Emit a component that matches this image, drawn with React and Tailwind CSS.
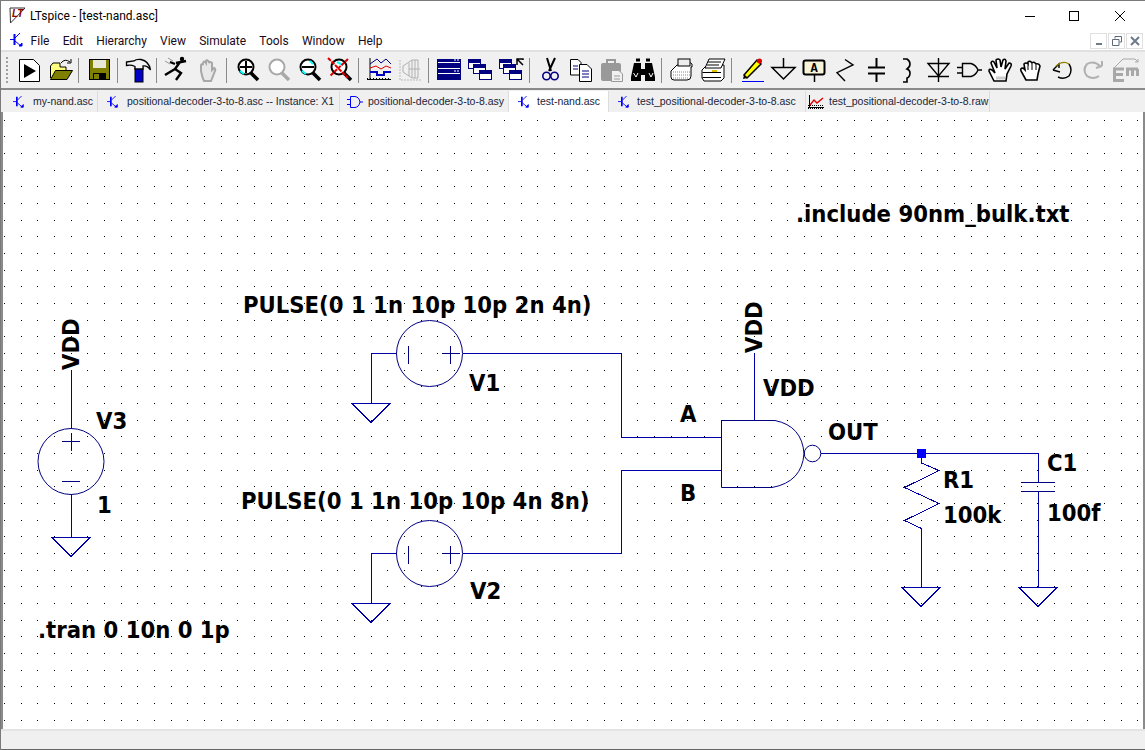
import React from "react";

const step = 50 / 3;
let gridPath = "";
for (let r = 0; r <= 36; r++) {
  for (let c = 0; c <= 68; c++) {
    const x = Math.floor(4.34 + c * step);
    const y = Math.floor(120.01 + r * step);
    gridPath += `M${x} ${y}h1v1h-1z`;
  }
}

// schematic wires, page coordinates
const WIRES = [
  "M71.5 370V428", "M71.5 495V537",
  "M463 353.5H621.5V437.5H722", "M397 353.5H371.5V403",
  "M463 553.5H621.5V470.5H722", "M397 553.5H371.5V603",
  "M754.5 353V420", "M821 453.5H1038.5V482", "M1038.5 492V587",
  "M921.5 528V587",
];

function Ground({ x, y }) {
  return <path d={`M${x - 19} ${y}.5H${x + 19}L${x} ${y + 19}.5Z`} fill="none" stroke="#0000a8" />;
}

function Source({ cx, cy, vertical }) {
  if (vertical) {
    return (
      <g stroke="#000080" fill="none">
        <circle cx={cx} cy={cy} r="33" />
        <path d={`M${cx - 9} ${cy - 20}H${cx + 9}M${cx} ${cy - 29}V${cy - 11}M${cx - 9} ${cy + 20}H${cx + 9}`} shapeRendering="crispEdges" />
      </g>
    );
  }
  return (
    <g stroke="#000080" fill="none">
      <circle cx={cx} cy={cy} r="33" />
      <path d={`M${cx - 21.5} ${cy - 8}V${cy + 10}M${cx + 12} ${cy}H${cx + 30}M${cx + 21} ${cy - 8}V${cy + 10}`} shapeRendering="crispEdges" />
    </g>
  );
}

function Transistor({ className }) {
  return (
    <svg viewBox="0 0 14 14" className={className} fill="none" stroke="#0000ff">
      <path d="M4.5 1V12" strokeWidth="2" />
      <path d="M4 6.5H0M5 5L10 0M5 8L11 13" />
      <path d="M9 13H12V10Z" fill="#0000ff" strokeWidth="1" />
    </svg>
  );
}

function GateGlyph() {
  return (
    <svg viewBox="0 0 16 14" className="w-[16px] h-[14px] shrink-0" fill="none" stroke="#0000ff">
      <path d="M3.5 1.5H8Q12 2 13 7Q12 12 8 12.5H3.5ZM0 4.5H3M0 9.5H3M13 7H16" />
    </svg>
  );
}

function PlotGlyph() {
  return (
    <svg viewBox="0 0 16 14" className="w-[16px] h-[14px] shrink-0" fill="none">
      <path d="M1.5 0V13M0 12.5H16" stroke="#000" />
      <path d="M0 10.5H16M0 13.5H16" stroke="#000" strokeDasharray="1 1" />
      <path d="M2 10L6 5L9 8L15 3" stroke="#e00000" strokeWidth="1.5" />
    </svg>
  );
}

function Sep() {
  return <div className="ml-[2px] mr-[5px] w-[1px] h-[25px] mt-[6px] bg-[#8a8a8a] shrink-0" />;
}

function Btn({ children }) {
  return (
    <div className="w-[31px] pl-[3px] pt-[6px] shrink-0">
      <svg viewBox="0 0 25 25" className="w-[25px] h-[25px] overflow-visible" fill="none">
        {children}
      </svg>
    </div>
  );
}

function Lens({ children, stroke = "#000" }) {
  return (
    <>
      <circle cx="11" cy="9" r="7.5" fill="#fff" stroke={stroke} strokeWidth="2" />
      <path d="M16 15L23 22" stroke={stroke} strokeWidth="3.5" />
      {children}
    </>
  );
}

function Win({ x, y, w = 12, h = 9 }) {
  return (
    <g>
      <rect x={x + 0.5} y={y + 0.5} width={w} height={h} fill="#fff" stroke="#000080" />
      <rect x={x} y={y} width={w + 1} height="4" fill="#000080" />
    </g>
  );
}

const TABS = [
  { width: "w-[93px]", pad: "pl-[8px] gap-[8px]", label: "my-nand.asc", icon: "t" },
  { width: "w-[242px]", pad: "pl-[9px] gap-[8px]", label: "positional-decoder-3-to-8.asc -- Instance: X1", icon: "t" },
  { width: "w-[169px]", pad: "pl-[7px] gap-[5px]", label: "positional-decoder-3-to-8.asy", icon: "g" },
  { width: "w-[100px]", pad: "pl-[9px] gap-[7px]", label: "test-nand.asc", icon: "t", active: true },
  { width: "w-[197px]", pad: "pl-[9px] gap-[7px]", label: "test_positional-decoder-3-to-8.asc", icon: "t" },
  { width: "w-[184px]", pad: "pl-[2px] gap-[5px]", label: "test_positional-decoder-3-to-8.raw", icon: "p" },
];

function Label({ className, children }) {
  return (
    <span className={`absolute whitespace-nowrap text-[23.6px] leading-[24px] font-bold text-black font-['DejaVu_Sans_Condensed','DejaVu_Sans',sans-serif] [font-stretch:condensed] ${className}`}>
      {children}
    </span>
  );
}

export default function App() {
  return (
    <div className="w-[1145px] h-[750px] flex flex-col overflow-hidden bg-[#f0f0f0] font-['Roboto',sans-serif] border-t border-l border-[#7a7a7a]">
      {/* Title */}
      <header className="h-[29px] bg-white flex items-center shrink-0">
        <svg viewBox="0 0 18 18" className="w-[18px] h-[18px] ml-[8px]">
          <path d="M1 1H16L1.5 16Z" fill="#fff" stroke="#333" />
          <text x="3" y="10" fontSize="10" fontWeight="bold" fontStyle="italic" fill="#8b0000" fontFamily="Liberation Sans">LT</text>
        </svg>
        <span className="ml-[3px] text-[12px] text-black">LTspice - [test-nand.asc]</span>
        <div className="ml-auto flex items-center mr-[2px]">
          <svg viewBox="0 0 46 29" className="w-[46px] h-[29px]" stroke="#000"><path d="M20 15.5H30" /></svg>
          <svg viewBox="0 0 46 29" className="w-[46px] h-[29px]" fill="none" stroke="#000"><rect x="18.5" y="10.5" width="9" height="9" /></svg>
          <svg viewBox="0 0 46 29" className="w-[46px] h-[29px]" stroke="#000"><path d="M18 10L28 20M28 10L18 20" /></svg>
        </div>
      </header>

      {/* Menu */}
      <nav className="h-[20px] bg-white flex items-center shrink-0 relative">
        <Transistor className="w-[14px] h-[14px] ml-[9px]" />
        <ul className="flex text-[12px] text-[#1a0a1a] pt-[2px]">
          <li className="px-[6.6px]">File</li>
          <li className="px-[6.6px]">Edit</li>
          <li className="px-[6.6px]">Hierarchy</li>
          <li className="px-[6.6px]">View</li>
          <li className="px-[6.6px]">Simulate</li>
          <li className="px-[6.6px]">Tools</li>
          <li className="px-[6.6px]">Window</li>
          <li className="px-[6.6px]">Help</li>
        </ul>
        <div className="ml-auto flex gap-[1px] mr-[2px] mt-[1px]">
          <div className="w-[17px] h-[16px] border border-[#e0e0e0] flex items-end justify-center pb-[3px]"><div className="w-[6px] h-[2px] bg-[#6d7a88]" /></div>
          <div className="w-[17px] h-[16px] border border-[#e0e0e0] flex items-center justify-center">
            <svg viewBox="0 0 10 10" className="w-[10px] h-[10px]" fill="none" stroke="#5d6a78"><path d="M3 2.5V.5H9.5V6H7.5M.5 3.5H7V9.5H.5Z" /></svg>
          </div>
          <div className="w-[17px] h-[16px] border border-[#e0e0e0] flex items-center justify-center">
            <svg viewBox="0 0 10 10" className="w-[10px] h-[10px]" stroke="#6d7a88" strokeWidth="2"><path d="M1 1L9 9M9 1L1 9" /></svg>
          </div>
        </div>
      </nav>

      {/* Toolbar */}
      <div className="h-[38px] border-t-2 border-[#e0e0e0] flex shrink-0 relative pl-[13px]">
        <div className="absolute left-[5px] top-[5px] h-[26px] w-[3px] border-l-2 border-dotted border-[#a0a0a0]" />
        <Btn>
          <path d="M2.5 1.5H16.5L22.5 7.5V23.5H2.5Z" fill="#fff" stroke="#000" />
          <path d="M7 6V20L19 13Z" fill="#000" />
        </Btn>
        <Btn>
          <path d="M2.5 20V8L5 5H12V9H18V13" fill="#ffff80" stroke="#000" />
          <path d="M2.5 21.5L7.5 12.5H24.5L19 21.5Z" fill="#808000" stroke="#000" />
          <path d="M13 5Q17 0 22 4M23 1V5H19" stroke="#000" />
        </Btn>
        <Sep />
        <Btn>
          <rect x="2.5" y="1.5" width="20" height="20" fill="#808000" stroke="#000" />
          <rect x="6" y="2" width="13" height="8" fill="#e8e8d8" />
          <rect x="6" y="15" width="13" height="7" fill="#000" />
          <rect x="7" y="16" width="5" height="5" fill="#808000" />
        </Btn>
        <Sep />
        <Btn>
          <rect x="9" y="10" width="8" height="14" fill="#0000c8" stroke="#000" />
          <path d="M0.5 4L8 3Q10 1 15 1.5Q23 3 24.5 12Q21 7 17 8V11H9V8.5Q5 6.5 0.5 7.5Z" fill="#f4f4f4" stroke="#000" strokeWidth="1.3" />
        </Btn>
        <Sep />
        <Btn>
          <path d="M15 4L10 11M11 5L21 3M10 6L5 4M10 11L0 17M10 11L16 15L11 22" stroke="#000" strokeWidth="2.4" />
          <circle cx="17" cy="1" r="2.2" fill="#000" />
          <path d="M3 0L8 3M0 3L5 6" stroke="#999" />
        </Btn>
        <Btn>
          <path d="M5 13V7Q6 5 7 7V5Q8 2 10 5V3Q11 1 13 4V5Q14 3 16 5V12L18 10Q20 11 19 13L15 23H8Q6 19 5 13Z" fill="#e8e8e8" stroke="#a8a8a8" strokeWidth="2" />
        </Btn>
        <Sep />
        <Btn>
          <Lens>
            <path d="M5 9H17M11 3V15" stroke="#000" strokeWidth="2" />
            <path d="M5 13L9 16" stroke="#00ffff" strokeWidth="2" />
          </Lens>
        </Btn>
        <Btn>
          <Lens stroke="#a8a8a8" />
        </Btn>
        <Btn>
          <Lens>
            <path d="M5 9H17" stroke="#000" strokeWidth="2" />
            <path d="M5 13L9 16M13 3L16 6" stroke="#00ffff" strokeWidth="2" />
          </Lens>
        </Btn>
        <Btn>
          <Lens>
            <path d="M9 4L15 7" stroke="#00ffff" strokeWidth="2" />
            <path d="M0 0L20 20M20 1L2 18" stroke="#e00000" strokeWidth="2" strokeDasharray="4 1" />
          </Lens>
        </Btn>
        <Sep />
        <Btn>
          <path d="M3 0V22M0 21.5H24" stroke="#000" />
          <path d="M0 20.5H24" stroke="#000" strokeDasharray="1 2" />
          <path d="M3 6L10 1L14 5L19 1L24 6" stroke="#000080" />
          <path d="M3 10L9 8L14 11L19 8L24 10" stroke="#e00000" />
          <path d="M3 14H10V17H17V14H24" stroke="#0000c0" strokeWidth="2" />
        </Btn>
        <Btn>
          <path d="M2 2V22H24" stroke="#bbb" strokeDasharray="2 1" />
          <path d="M5 8L14 2H20V20H14L5 14ZM11 5V18M14 2V20M17 2V20M22 11H11" stroke="#b0b0b0" />
        </Btn>
        <Sep />
        <Btn>
          <rect x="0.5" y="1.5" width="23" height="10" fill="#000080" stroke="#000080" />
          <rect x="0.5" y="12.5" width="23" height="9" fill="#000080" stroke="#000080" />
          <path d="M1 4.5H23M1 15.5H23" stroke="#fff" />
          <path d="M17 2H22M17 13H22" stroke="#fff" strokeDasharray="2 1" />
          <rect x="1" y="6" width="22" height="4" fill="#000080" />
          <rect x="1" y="10" width="22" height="1" fill="#fff" />
        </Btn>
        <Btn>
          <Win x={0} y={1} />
          <Win x={5} y={6} />
          <Win x={11} y={12} />
        </Btn>
        <Btn>
          <Win x={0} y={1} />
          <Win x={4} y={6} />
          <Win x={10} y={12} />
          <path d="M18 7V1H24V2M18 1L24 7" stroke="#000" strokeWidth="1.5" />
        </Btn>
        <Sep />
        <Btn>
          <path d="M9 0L13 13M17 0L11 13" stroke="#000" strokeWidth="2" />
          <circle cx="8.5" cy="18" r="3.7" stroke="#000080" strokeWidth="1.6" />
          <circle cx="16.5" cy="18" r="3.7" stroke="#000080" strokeWidth="1.6" />
        </Btn>
        <Btn>
          <path d="M1.5 1.5H9L12 4.5V17H1.5Z" fill="#fff" stroke="#000" />
          <path d="M10.5 6.5H18L22.5 11V23.5H10.5Z" fill="#fff" stroke="#000" />
          <path d="M4 8H9M4 11H9M13 13H20M13 16H20M13 19H20" stroke="#000080" />
        </Btn>
        <Btn>
          <rect x="1" y="5" width="20" height="18" rx="2" fill="#999" />
          <rect x="7" y="2" width="8" height="5" fill="none" stroke="#999" strokeWidth="2" />
          <path d="M11.5 12.5H19L22.5 16V23.5H11.5Z" fill="#f0f0f0" stroke="#999" />
          <path d="M14 18H20M14 21H20" stroke="#999" />
        </Btn>
        <Btn>
          <path d="M3 5H10V11H14V5H21L24 19V23H14V17H10V23H0V19Z" fill="#000" />
          <path d="M2.5 15L5 19L7 15M18 15L20 19L22 15" stroke="#fff" />
          <path d="M5 2H9M15 2H19" stroke="#000" strokeWidth="3" />
        </Btn>
        <Sep />
        <Btn>
          <path d="M1 13L7 7H18V3L22 6V9H21V18Q21 22 17 22H4Q1 22 1 19Z" fill="#fff" stroke="#000" />
          <rect x="8" y="1" width="12" height="7" fill="#eee" stroke="#000" />
          <path d="M3 14H20M3 17H20M3 20H19" stroke="#888" strokeDasharray="1 1" />
        </Btn>
        <Btn>
          <path d="M1 12L6 7H23V20L20 23H3L1 20Z" fill="#fff" stroke="#000" />
          <path d="M8 1H24L20 10H4Z" fill="#fff" stroke="#000" />
          <path d="M7 4H20M6 7H18" stroke="#000" />
          <path d="M1.5 14.5H20M1.5 19.5H20" stroke="#000" />
          <path d="M11 13H16" stroke="#e0c000" strokeWidth="2" />
        </Btn>
        <Sep />
        <Btn>
          <path d="M4 17L7 20L21 6L17 2Z" fill="#ffff00" stroke="#000" strokeWidth="1.5" />
          <path d="M4 17L3 21L7 20Z" fill="#000" />
          <circle cx="19.5" cy="3" r="2.5" fill="#e00000" />
          <path d="M2 23.5H24" stroke="#0000ff" />
        </Btn>
        <Btn>
          <path d="M12.5 0V9M1 9.5H24L12.5 21Z" stroke="#000" strokeWidth="1.5" />
        </Btn>
        <Btn>
          <rect x="1.5" y="2.5" width="21" height="14" rx="2" fill="#f8f4d8" stroke="#000" strokeWidth="2" />
          <text x="12" y="14" textAnchor="middle" fontSize="12" fontWeight="bold" fill="#000" fontFamily="Liberation Mono">A</text>
          <path d="M12.5 17V24" stroke="#000" strokeWidth="1.5" />
        </Btn>
        <Btn>
          <path d="M12 1.5L20 7L4 14.7L12 23" stroke="#000" strokeWidth="1.4" />
        </Btn>
        <Btn>
          <path d="M12.5 0V9M12.5 15V24M4 9.5H21M4 15.5H21" stroke="#000" strokeWidth="2" />
        </Btn>
        <Btn>
          <path d="M8 1H12Q15 3 15 6Q15 9 12 11Q15 12 15 15Q15 19 12 20V24H8" stroke="#000" strokeWidth="1.6" />
        </Btn>
        <Btn>
          <path d="M12.5 0V24M2 5.5H23L12.5 18ZM2 18.5H23" stroke="#000" strokeWidth="1.4" />
        </Btn>
        <Btn>
          <path d="M5.5 5.5H14Q19 7 21 12Q19 17 14 18.5H5.5ZM0 9.5H5M0 15H5M21 12H25" stroke="#000" strokeWidth="1.4" />
        </Btn>
        <Btn>
          <path d="M6 23L1 13Q1 10 4 12L7 15L3 5Q4 2 6 4L9 10L8 2Q10 0 12 2L13 9L15 2Q17 0 18 3L17 11L21 5Q24 5 23 8L19 16L18 23Z" fill="#fff" stroke="#000" strokeWidth="1.6" />
          <path d="M8 20H17" stroke="#ccc" strokeWidth="3" />
        </Btn>
        <Btn>
          <path d="M7 22L2 13Q1 10 4 10L6 12L5 6Q7 4 9 6V4Q11 2 13 5Q15 3 17 6Q20 5 21 8L19 16L18 22Z" fill="#fff" stroke="#000" strokeWidth="1.6" />
          <path d="M9 7V12M13 6V12M17 7V12" stroke="#000" />
        </Btn>
        <Btn>
          <path d="M3 12L9 6L9 10M3 12L10 14" stroke="#000" strokeWidth="1.4" />
          <path d="M6 8Q13 2 19 6" stroke="#908000" strokeWidth="1.4" />
          <path d="M19 6Q23 12 19 18Q14 22 8 19" stroke="#000" strokeWidth="1.4" />
        </Btn>
        <Btn>
          <path d="M19 8Q13 2 6 6Q1 12 6 18Q12 22 18 18M21 8L15 10M21 8V3" stroke="#b0b0b0" strokeWidth="2" />
        </Btn>
        <Btn>
          <path d="M12 11H2.5V22.5H12M2.5 16.5H11" stroke="#a8a8a8" strokeWidth="3" />
          <path d="M14 11H26M15.5 11V18M20.5 11V18M25.5 11V18" stroke="#a8a8a8" strokeWidth="3" />
          <path d="M2 10L11 1H23L26 4M26 1V4H23" stroke="#a8a8a8" />
        </Btn>
      </div>

      {/* Tabs */}
      <div className="h-[24px] border-t-2 border-[#8a8a8a] flex pl-[4px] pt-[1px] text-[10.5px] text-[#1a2438] font-['Liberation_Sans',sans-serif] shrink-0">
        {TABS.map((t) => (
          <div
            key={t.label}
            className={`${t.width} ${t.pad} flex items-center whitespace-nowrap border-r border-[#dcdcdc] h-[21px] ${t.active ? "bg-white" : "pt-[1px]"}`}
          >
            {t.icon === "t" && <Transistor className="w-[12px] h-[14px] shrink-0" />}
            {t.icon === "g" && <GateGlyph />}
            {t.icon === "p" && <PlotGlyph />}
            <span>{t.label}</span>
          </div>
        ))}
      </div>

      {/* Schematic */}
      <main className="relative flex-1 bg-white border-l-2 border-r-2 border-[#8a8a8a] overflow-hidden">
        <svg viewBox="3 112 1140 616" className="absolute left-0 top-0 w-[1140px] h-[616px]">
          <path d={gridPath} fill="#000" shapeRendering="crispEdges" />
          <g fill="none" stroke="#0000a8" shapeRendering="crispEdges">
            {WIRES.map((d) => (
              <path key={d} d={d} />
            ))}
            <path d="M921.5 458V463L939 470.5L904.5 487.5L939 503.5L904.5 520.5L921.5 528.5" />
            <Ground x={71} y={537} />
            <Ground x={371} y={403} />
            <Ground x={371} y={603} />
            <Ground x={921} y={587} />
            <Ground x={1038} y={587} />
          </g>
          <Source cx={71} cy={461.5} vertical />
          <Source cx={429.5} cy={353.5} />
          <Source cx={429.5} cy={553.5} />
          <g fill="none" stroke="#000080">
            <path d="M775 420.5H721.5V487.5H772Q802 482 804 453.5Q802 426 775 420.5Z" />
            <circle cx="812.5" cy="453.5" r="8.3" />
            <path d="M1021 482.5H1055M1021 491.5H1055" shapeRendering="crispEdges" />
          </g>
          <rect x="917" y="449" width="9" height="9" fill="#0000ff" />
        </svg>
        <Label className="left-[793px] top-[90px]">.include 90nm_bulk.txt</Label>
        <Label className="left-[240px] top-[181px]">PULSE(0 1 1n 10p 10p 2n 4n)</Label>
        <Label className="left-[238px] top-[377px]">PULSE(0 1 1n 10p 10p 4n 8n)</Label>
        <Label className="left-[466px] top-[259px]">V1</Label>
        <Label className="left-[467px] top-[467px]">V2</Label>
        <Label className="left-[93px] top-[297px]">V3</Label>
        <Label className="left-[94px] top-[381px]">1</Label>
        <Label className="left-[677px] top-[290px]">A</Label>
        <Label className="left-[677px] top-[369px]">B</Label>
        <Label className="left-[760px] top-[264px]">VDD</Label>
        <Label className="left-[825px] top-[308px]">OUT</Label>
        <Label className="left-[940px] top-[356px]">R1</Label>
        <Label className="left-[940px] top-[391px]">100k</Label>
        <Label className="left-[1044px] top-[339px]">C1</Label>
        <Label className="left-[1044px] top-[389px]">100f</Label>
        <Label className="left-[35px] top-[506px]">.tran 0 10n 0 1p</Label>
        <Label className="left-[56px] top-[258px] origin-top-left -rotate-90">VDD</Label>
        <Label className="left-[739px] top-[241px] origin-top-left -rotate-90">VDD</Label>
      </main>

      {/* Status bar */}
      <footer className="h-[21px] bg-[#f0f0f0] border-t-2 border-[#e4e4e4] border-b border-b-[#666] shrink-0" />
    </div>
  );
}
